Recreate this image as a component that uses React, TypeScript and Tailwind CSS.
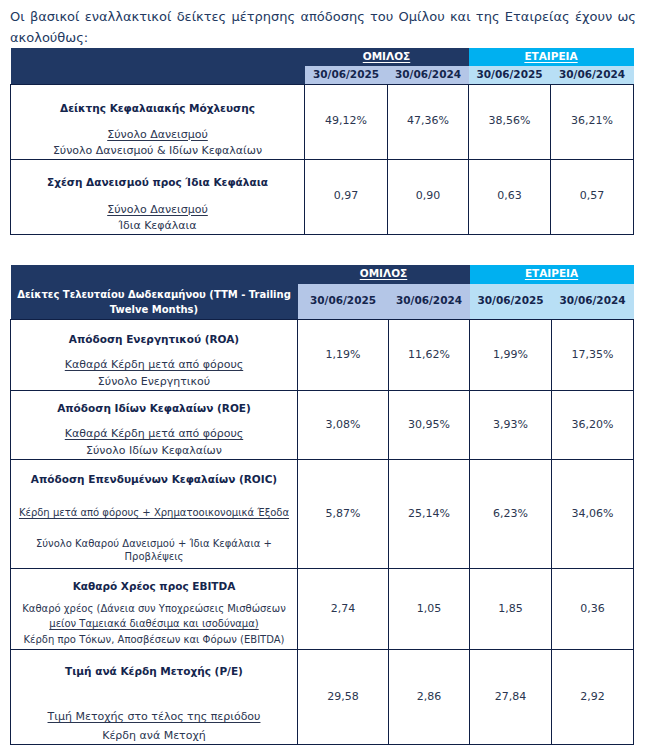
type Line = { text: string; u?: boolean; cls: string };
type Row = { title: string; h: string; pad: string; lines: Line[]; values: string[] };

const leverage: Row[] = [
  {
    title: 'Δείκτης Κεφαλαιακής Μόχλευσης',
    h: 'h-[75px]',
    pad: 'pt-[15px]',
    lines: [
      { text: 'Σύνολο Δανεισμού', u: true, cls: 'mt-[11px] leading-4' },
      { text: 'Σύνολο Δανεισμού & Ιδίων Κεφαλαίων', cls: 'leading-4' },
    ],
    values: ['49,12%', '47,36%', '38,56%', '36,21%'],
  },
  {
    title: 'Σχέση Δανεισμού προς Ίδια Κεφάλαια',
    h: 'h-[74px]',
    pad: 'pt-[14px]',
    lines: [
      { text: 'Σύνολο Δανεισμού', u: true, cls: 'mt-[12px] leading-4' },
      { text: 'Ίδια Κεφάλαια', cls: 'leading-4' },
    ],
    values: ['0,97', '0,90', '0,63', '0,57'],
  },
];

const ttm: Row[] = [
  {
    title: 'Απόδοση Ενεργητικού (ROA)',
    h: 'h-[71px]',
    pad: 'pt-[11px]',
    lines: [
      { text: 'Καθαρά Κέρδη μετά από φόρους', u: true, cls: 'mt-[10px] leading-4' },
      { text: 'Σύνολο Ενεργητικού', cls: 'mt-px leading-4' },
    ],
    values: ['1,19%', '11,62%', '1,99%', '17,35%'],
  },
  {
    title: 'Απόδοση Ιδίων Κεφαλαίων (ROE)',
    h: 'h-[68px]',
    pad: 'pt-[9px]',
    lines: [
      { text: 'Καθαρά Κέρδη μετά από φόρους', u: true, cls: 'mt-[10px] leading-4' },
      { text: 'Σύνολο Ιδίων Κεφαλαίων', cls: 'mt-px leading-4' },
    ],
    values: ['3,08%', '30,95%', '3,93%', '36,20%'],
  },
  {
    title: 'Απόδοση Επενδυμένων Κεφαλαίων (ROIC)',
    h: 'h-[109px]',
    pad: 'pt-[11px]',
    lines: [
      { text: 'Κέρδη μετά από φόρους + Χρηματοοικονομικά Έξοδα', u: true, cls: 'mt-[18px] leading-4 text-[10px]' },
      { text: 'Σύνολο Καθαρού Δανεισμού + Ίδια Κεφάλαια +', cls: 'mt-[16px] leading-[13px] text-[10px]' },
      { text: 'Προβλέψεις', cls: 'leading-[13px] text-[10px]' },
    ],
    values: ['5,87%', '25,14%', '6,23%', '34,06%'],
  },
  {
    title: 'Καθαρό Χρέος προς EBITDA',
    h: 'h-[81px]',
    pad: 'pt-[9px]',
    lines: [
      { text: 'Καθαρό χρέος (Δάνεια συν Υποχρεώσεις Μισθώσεων', cls: 'mt-[7px] leading-[15px] text-[10px]' },
      { text: 'μείον Ταμειακά διαθέσιμα και ισοδύναμα)', u: true, cls: 'leading-4 text-[10px]' },
      { text: 'Κέρδη προ Τόκων, Αποσβέσεων και Φόρων (EBITDA)', cls: 'leading-4 text-[10px]' },
    ],
    values: ['2,74', '1,05', '1,85', '0,36'],
  },
  {
    title: 'Τιμή ανά Κέρδη Μετοχής (P/E)',
    h: 'h-[95px]',
    pad: 'pt-[13px]',
    lines: [
      { text: 'Τιμή Μετοχής στο τέλος της περιόδου', u: true, cls: 'mt-[30px] leading-4' },
      { text: 'Κέρδη ανά Μετοχή', cls: 'mt-[3px] leading-4' },
    ],
    values: ['29,58', '2,86', '27,84', '2,92'],
  },
];

const dates = ['30/06/2025', '30/06/2024', '30/06/2025', '30/06/2024'];

function BodyRows({ rows }: { rows: Row[] }) {
  return (
    <>
      {rows.map((row) => (
        <tr key={row.title} className={row.h}>
          <td className="border border-[#0f1f45] p-0 align-top text-center">
            <div className={row.pad}>
              <div className="text-[10.5px] font-bold leading-4 text-[#14254d] whitespace-nowrap">{row.title}</div>
              {row.lines.map((l) => (
                <div key={l.text} className={`${l.cls} whitespace-nowrap ${l.u ? 'underline underline-offset-2' : ''}`}>
                  {l.text}
                </div>
              ))}
            </div>
          </td>
          {row.values.map((v, i) => (
            <td key={i} className="border border-[#0f1f45] p-0 align-middle text-center">
              {v}
            </td>
          ))}
        </tr>
      ))}
    </>
  );
}

function HeaderGroups() {
  return (
    <>
      <th colSpan={2} className="p-0 bg-[#203864] text-white text-[10.5px] font-bold underline underline-offset-2 align-middle">
        ΟΜΙΛΟΣ
      </th>
      <th colSpan={2} className="p-0 bg-[#00b0f0] text-white text-[10.5px] font-bold underline underline-offset-2 align-middle">
        ΕΤΑΙΡΕΙΑ
      </th>
    </>
  );
}

function DateCells() {
  return (
    <>
      {dates.map((d, i) => (
        <th
          key={i}
          className={`p-0 text-[10.5px] font-bold text-[#14254d] align-middle ${i < 2 ? 'bg-[#b4c6e7]' : 'bg-[#b8dff5]'}`}
        >
          {d}
        </th>
      ))}
    </>
  );
}

export default function App() {
  return (
    <div className="w-[646px] min-h-[755px] bg-white px-[10px] pt-[6px] font-['DejaVu_Sans',sans-serif] text-[#2a3550]">
      <div className="text-[13px] leading-[21px] text-[#23395f]">
        <div className="text-justify [text-align-last:justify] whitespace-nowrap">
          Οι βασικοί εναλλακτικοί δείκτες μέτρησης απόδοσης του Ομίλου και της Εταιρείας έχουν ως
        </div>
        <div>ακολούθως:</div>
      </div>

      <table className="w-[623px] table-fixed border-collapse text-[11px] mt-0">
        <colgroup>
          <col className="w-[294px]" />
          <col className="w-[83px]" />
          <col className="w-[81px]" />
          <col className="w-[82px]" />
          <col className="w-[83px]" />
        </colgroup>
        <thead>
          <tr className="h-[18px]">
            <th rowSpan={2} className="p-0 bg-[#203864]"></th>
            <HeaderGroups />
          </tr>
          <tr className="h-[18px]">
            <DateCells />
          </tr>
        </thead>
        <tbody>
          <BodyRows rows={leverage} />
        </tbody>
      </table>

      <table className="w-[623px] table-fixed border-collapse text-[11px] mt-[30px]">
        <colgroup>
          <col className="w-[287px]" />
          <col className="w-[91px]" />
          <col className="w-[81px]" />
          <col className="w-[82px]" />
          <col className="w-[82px]" />
        </colgroup>
        <thead>
          <tr className="h-[19px]">
            <th rowSpan={2} className="p-0 pb-[2px] bg-[#203864] text-white text-[10px] font-bold leading-[15px] align-bottom text-center">
              <div className="whitespace-nowrap">Δείκτες Τελευταίου Δωδεκαμήνου (TTM - Trailing</div>
              <div>Twelve Months)</div>
            </th>
            <HeaderGroups />
          </tr>
          <tr className="h-[36px]">
            <DateCells />
          </tr>
        </thead>
        <tbody>
          <BodyRows rows={ttm} />
        </tbody>
      </table>
    </div>
  );
}
